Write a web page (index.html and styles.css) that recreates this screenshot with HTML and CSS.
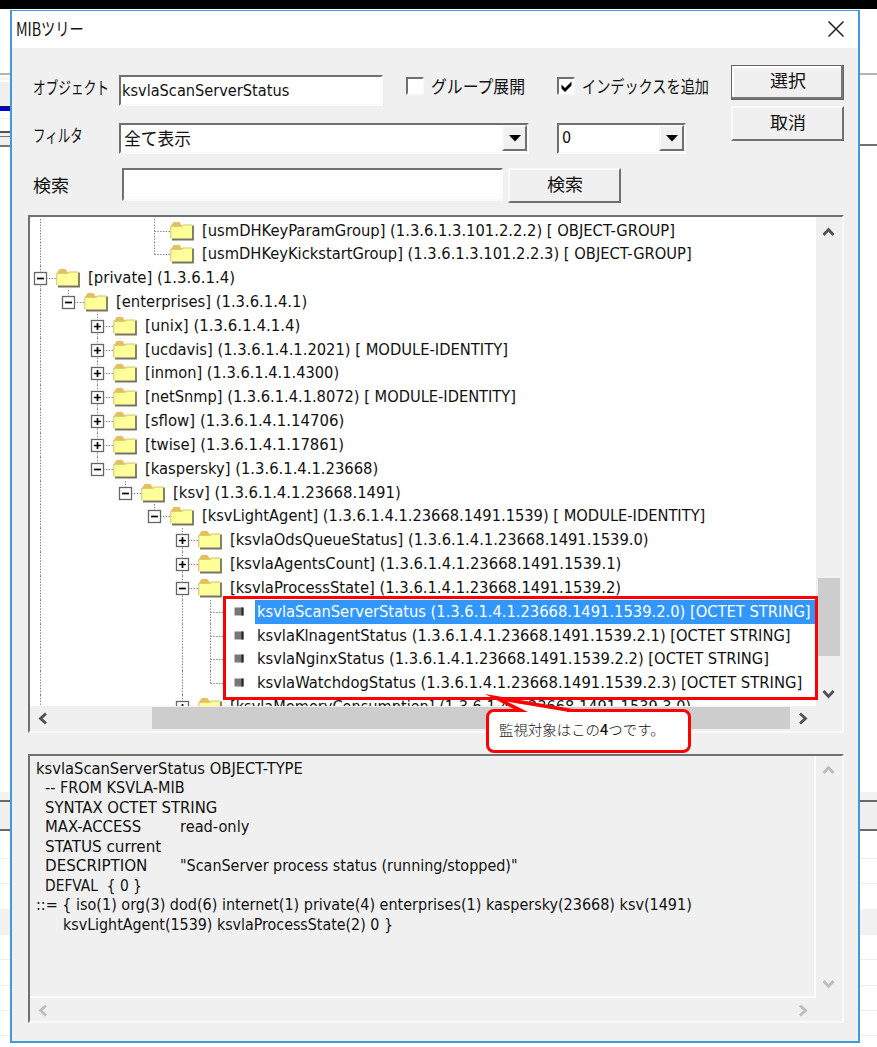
FILE: index.html
```html
<!DOCTYPE html>
<html lang="ja">
<head>
<meta charset="utf-8">
<title>MIBツリー</title>
<link rel="stylesheet" href="styles.css">
</head>
<body>
<div class="topbar"></div>
<div class="desktop">
  <svg class="strip" width="10" height="1038" viewBox="0 9 10 1038" shape-rendering="crispEdges">
    <rect y="73" width="10" height="2" fill="#b4b4b4"/><rect y="77" width="10" height="3" fill="#f4f4f4"/>
    <rect y="82" width="10" height="24" fill="#efefef"/><rect y="106" width="10" height="1" fill="#222"/><rect y="107" width="10" height="4" fill="#0000d8"/>
    <rect y="118" width="10" height="1" fill="#eee"/><rect y="131" width="10" height="2" fill="#555"/><rect y="133" width="10" height="12" fill="#efefef"/>
    <rect y="136" width="10" height="1" fill="#777"/><rect y="145" width="10" height="2" fill="#777"/>
    <rect y="792" width="10" height="8" fill="#f2f2f2"/><rect y="800" width="10" height="2" fill="#6a6a6a"/><rect y="802" width="10" height="27" fill="#efefef"/><rect y="829" width="10" height="2" fill="#6a6a6a"/>
    <path d="M0 858.5H10M0 883.5H10M0 959.5H10M0 985.5H10M0 1010.5H10M0 1035.5H10" stroke="#ececec"/><rect y="909" width="10" height="26" fill="#f1f1f1"/>
  </svg>

  <div class="dialog">
    <div class="titlebar">
      <span class="title" data-w="68">MIBツリー</span>
      <svg class="close" width="18" height="18" viewBox="0 0 18 18"><path d="M1.500 1.500L16.500 16.500M16.500 1.500L1.500 16.500" stroke="#222" stroke-width="1.500"/></svg>
    </div>

    <div class="form">
      <div class="fields">
        <div class="row row-object">
          <span class="label"><span data-w="76">オブジェクト</span></span>
          <div class="sunken text-input"><span class="latin" data-w="167">ksvlaScanServerStatus</span></div>
          <div class="sunken check"></div>
          <span class="check-label"><span data-w="94">グループ展開</span></span>
          <div class="sunken check check-second"><svg width="13" height="13" viewBox="0 0 13 13"><path d="M1.500 4.500L5 8L11.500 1.500V5.500L5 12L1.500 8.500Z"/></svg></div>
          <span class="check-label"><span data-w="127">インデックスを追加</span></span>
        </div>
        <div class="row row-filter">
          <span class="label"><span data-w="50">フィルタ</span></span>
          <div class="sunken combo combo-wide"><span data-w="67">全て表示</span><i class="drop"><svg width="12" height="7"><path d="M0 0H12L6 6.500Z"/></svg></i></div>
          <div class="sunken combo combo-narrow"><span class="latin">0</span><i class="drop"><svg width="12" height="7"><path d="M0 0H12L6 6.500Z"/></svg></i></div>
        </div>
        <div class="row row-search">
          <span class="label"><span data-w="36">検索</span></span>
          <div class="sunken search-input"></div>
          <div class="button"><span data-w="36">検索</span></div>
        </div>
      </div>
      <div class="actions">
        <div class="button default"><span data-w="36">選択</span></div>
        <div class="button"><span data-w="36">取消</span></div>
      </div>
    </div>

    <div class="sunken panel tree-panel">
      <div class="tree" id="tree"></div>
      <div class="vscroll">
        <svg width="13" height="10" viewBox="0 0 13 10"><path d="M1.500 8L6.500 2.500L11.500 8"/></svg>
        <div class="vthumb"></div>
        <svg width="13" height="10" viewBox="0 0 13 10"><path d="M1.500 2L6.500 7.500L11.500 2"/></svg>
      </div>
      <div class="hscroll">
        <svg width="10" height="13" viewBox="0 0 10 13"><path d="M8 1.500L2.500 6.500L8 11.500"/></svg>
        <div class="hthumb"></div>
        <svg width="10" height="13" viewBox="0 0 10 13"><path d="M2 1.500L7.500 6.500L2 11.500"/></svg>
      </div>
    </div>

    <div class="sunken panel detail-panel">
      <div class="detail">
        <div><span data-w="267">ksvlaScanServerStatus OBJECT-TYPE</span></div>
        <div class="in1"><span data-w="140">-- FROM KSVLA-MIB</span></div>
        <div class="in1"><span data-w="172">SYNTAX OCTET STRING</span></div>
        <div class="in1"><b><span data-w="96">MAX-ACCESS</span></b><span data-w="69">read-only</span></div>
        <div class="in1"><span data-w="116">STATUS current</span></div>
        <div class="in1"><b><span data-w="102">DESCRIPTION</span></b><span data-w="338">"ScanServer process status (running/stopped)"</span></div>
        <div class="in1"><span data-w="97">DEFVAL&nbsp; { 0 }</span></div>
        <div><span data-w="656">::= { iso(1) org(3) dod(6) internet(1) private(4) enterprises(1) kaspersky(23668) ksv(1491)</span></div>
        <div class="in2"><span data-w="330">ksvLightAgent(1539) ksvlaProcessState(2) 0 }</span></div>
      </div>
      <div class="vscroll disabled">
        <svg width="13" height="10" viewBox="0 0 13 10"><path d="M1.500 8L6.500 2.500L11.500 8"/></svg>
        <svg width="13" height="10" viewBox="0 0 13 10"><path d="M1.500 2L6.500 7.500L11.500 2"/></svg>
      </div>
      <div class="hscroll disabled">
        <svg width="10" height="13" viewBox="0 0 10 13"><path d="M8 1.500L2.500 6.500L8 11.500"/></svg>
        <svg width="10" height="13" viewBox="0 0 10 13"><path d="M2 1.500L7.500 6.500L2 11.500"/></svg>
      </div>
    </div>
  </div>

  <svg class="strip" width="17" height="1038" viewBox="0 9 17 1038" shape-rendering="crispEdges">
    <rect y="73" width="17" height="2" fill="#b4b4b4"/><rect y="144" width="17" height="2" fill="#707070"/>
    <rect y="792" width="17" height="8" fill="#f2f2f2"/><rect y="800" width="17" height="2" fill="#6a6a6a"/><rect y="802" width="17" height="27" fill="#efefef"/><rect y="829" width="17" height="2" fill="#6a6a6a"/>
    <path d="M0 858.500H17M0 883.500H17M0 959.500H17M0 985.500H17M0 1010.500H17M0 1035.500H17" stroke="#ececec"/><rect y="909" width="17" height="26" fill="#f1f1f1"/>
  </svg>
</div>

<div class="highlight"></div>
<div class="callout"><span data-w="166">監視対象はこの<b>4</b>つです。</span></div>
<svg class="tail" width="100" height="21" viewBox="0 0 100 21"><path d="M34 17.500L14 7.500L82 17.500V21H34Z" fill="#fff"/><path d="M0 1L88 16V19H84L22 8.500L43 19H26L29 16Z" fill="#f00"/></svg>
<script src="tree.js"></script>
</body>
</html>
```
FILE: styles.css
```css
* { box-sizing: border-box; }
body {
  margin: 0;
  width: 877px;
  height: 1047px;
  overflow: hidden;
  position: relative;
  background: #fff;
  color: #111;
  font: 17.500px/24px "Noto Sans CJK JP", sans-serif;
}
svg { display: block; flex: none; }
span { white-space: pre; }
[data-w] { display: inline-block; transform-origin: 0 50%; }
.topbar { height: 9px; background: #000; }
.desktop { display: flex; height: 1038px; }
.dialog {
  width: 850px;
  height: 1033px;
  margin-top: 1px;
  border: 2px solid #4599d6;
  border-top-width: 1px;
  background: #f0f0f0;
}
.titlebar {
  height: 37px;
  padding: 0 13px 3px 4px;
  display: flex;
  align-items: center;
  justify-content: space-between;
  background: #fff;
}
.title { font-size: 18px; }
.close { margin-top: 2px; }
.latin, .tree, .detail { font-family: "DejaVu Sans Condensed", "DejaVu Sans", sans-serif; font-stretch: condensed; }
.latin { font-size: 16px; }

.form { height: 167px; padding: 17px 14px 0 21px; display: flex; }
.fields { width: 699px; }
.row { display: flex; align-items: flex-start; }
.row-object { height: 48px; padding-top: 10px; }
.row-filter { height: 45px; padding-top: 10px; }
.row-search { padding-top: 10px; }
.label { width: 86px; flex: none; height: 28px; }
.row-search .label { width: 89px; padding-top: 5px; }
.sunken {
  border: 2px solid;
  border-color: #707070 #fafafa #fafafa #707070;
  background: #fff;
}
.text-input { width: 264px; height: 31px; margin-right: 23px; padding: 0 1px; line-height: 23px; }
.check { width: 18px; height: 18px; margin: 2px 7px 0 0; flex: none; padding: 1px; }
.check-label { width: 126px; line-height: 22px; flex: none; }
.check-label:last-child { width: 130px; }
.combo { height: 31px; display: flex; justify-content: space-between; padding-left: 3px; line-height: 26px; }
.combo-wide { width: 410px; margin-right: 28px; }
.combo-narrow { width: 129px; }
.drop {
  width: 25px;
  height: 26px;
  display: flex;
  align-items: center;
  justify-content: center;
  background: #f0f0f0;
  border: 2px solid;
  border-color: #f8f8f8 #707070 #707070 #f8f8f8;
}
.search-input { width: 381px; height: 33px; margin-right: 5px; }
.button {
  width: 113px;
  height: 35px;
  display: flex;
  align-items: center;
  justify-content: center;
  background: #f0f0f0;
  border: 2px solid;
  border-color: #fafafa #707070 #707070 #fafafa;
  padding-bottom: 4px;
}
.actions { display: flex; flex-direction: column; gap: 6px; }
.default { border: 1px solid #666; box-shadow: inset -2px -2px #777, inset 2px 2px #fff; padding-bottom: 5px; }

.panel {
  margin-left: 16px;
  width: 816px;
  display: grid;
  grid-template-columns: 1fr 26px;
  background: #f0f0f0;
}
.tree-panel { height: 518px; grid-template-rows: 489px 25px; }
.tree { background: #fff; overflow: hidden; padding-top: 1.500px; font-size: 16px; }
.node { display: flex; height: 23.840px; line-height: 24.800px; }
.node .name { flex: none; height: 23.840px; }
.selected { background: #3297fd; color: #fff; width: 561px; margin-left: -2px; padding-left: 2px; }
.vscroll { display: flex; flex-direction: column; align-items: center; padding: 10px 2px 7px 1px; background: #f0f0f0; }
.vthumb { width: 22px; height: 78px; margin: 341px 0 auto; background: #cdcdcd; }
.hscroll { display: flex; align-items: center; padding: 0 8px 0 8px; }
.hthumb { width: 638px; height: 22px; margin: 0 auto 2px 104px; background: #cdcdcd; }
.vscroll path, .hscroll path { fill: none; stroke: #505050; stroke-width: 2.800; }
.detail-panel { height: 269px; margin-top: 21px; grid-template-rows: 242px 23px; }
.detail {
  padding: 3px 0 0 6px;
  line-height: 20.400px;
  font-size: 16px;
  border: solid #fcfcfc;
  border-width: 0 2px 2px 0;
}
.detail div { height: 19.450px; display: flex; }
.detail b { font-weight: normal; width: 135px; }
.detail .in1 { padding-left: 9px; }
.detail .in2 { padding-left: 27px; }
.disabled { justify-content: space-between; }
.disabled path { stroke: #bdbdbd; }
.vscroll.disabled { padding-top: 9px; padding-bottom: 9px; }
.hscroll.disabled { padding-top: 2px; }

.highlight { position: absolute; left: 223px; top: 596px; width: 595px; height: 104px; border: 3px solid #f00; }
.callout {
  position: absolute;
  left: 486px;
  top: 709px;
  width: 205px;
  height: 44px;
  border: 3px solid #f00;
  border-radius: 8px;
  background: #fff;
  padding: 5px 0 0 10px;
  font: 300 14px/24px "Noto Sans CJK JP", sans-serif;
}
.callout b { font-weight: 500; }
.tail { position: absolute; left: 485px; top: 693px; }
```
FILE: tree.js
```js
const STEP = 28.4;

// level, name, label width, marker (+, -, leaf or none), guide levels, last child
const rows = [
  [4, '[usmDHKeyParamGroup] (1.3.6.1.3.101.2.2.2) [ OBJECT-GROUP]', 473, '', [0, 4]],
  [4, '[usmDHKeyKickstartGroup] (1.3.6.1.3.101.2.2.3) [ OBJECT-GROUP]', 490, '', [0], 1],
  [0, '[private] (1.3.6.1.4)', 147, '-', [0]],
  [1, '[enterprises] (1.3.6.1.4.1)', 191, '-', [0], 1],
  [2, '[unix] (1.3.6.1.4.1.4)', 155, '+', [0, 2]],
  [2, '[ucdavis] (1.3.6.1.4.1.2021) [ MODULE-IDENTITY]', 363, '+', [0, 2]],
  [2, '[inmon] (1.3.6.1.4.1.4300)', 194, '+', [0, 2]],
  [2, '[netSnmp] (1.3.6.1.4.1.8072) [ MODULE-IDENTITY]', 371, '+', [0, 2]],
  [2, '[sflow] (1.3.6.1.4.1.14706)', 199, '+', [0, 2]],
  [2, '[twise] (1.3.6.1.4.1.17861)', 199, '+', [0, 2]],
  [2, '[kaspersky] (1.3.6.1.4.1.23668)', 233, '-', [0], 1],
  [3, '[ksv] (1.3.6.1.4.1.23668.1491)', 228, '-', [0], 1],
  [4, '[ksvLightAgent] (1.3.6.1.4.1.23668.1491.1539) [ MODULE-IDENTITY]', 503, '-', [0], 1],
  [5, '[ksvlaOdsQueueStatus] (1.3.6.1.4.1.23668.1491.1539.0)', 419, '+', [0, 5]],
  [5, '[ksvlaAgentsCount] (1.3.6.1.4.1.23668.1491.1539.1)', 391, '+', [0, 5]],
  [5, '[ksvlaProcessState] (1.3.6.1.4.1.23668.1491.1539.2)', 391, '-', [0, 5]],
  [6, 'ksvlaScanServerStatus (1.3.6.1.4.1.23668.1491.1539.2.0) [OCTET STRING]', 554, 'leaf', [0, 5, 6]],
  [6, 'ksvlaKlnagentStatus (1.3.6.1.4.1.23668.1491.1539.2.1) [OCTET STRING]', 534, 'leaf', [0, 5, 6]],
  [6, 'ksvlaNginxStatus (1.3.6.1.4.1.23668.1491.1539.2.2) [OCTET STRING]', 512, 'leaf', [0, 5, 6]],
  [6, 'ksvlaWatchdogStatus (1.3.6.1.4.1.23668.1491.1539.2.3) [OCTET STRING]', 545, 'leaf', [0, 5], 1],
  [5, '[ksvlaMemoryConsumption] (1.3.6.1.4.1.23668.1491.1539.3.0)', 461, '+', [0, 5]]
];

const folder = x => `<g transform="translate(${x} 1.500)">
  <path d="M1 5.500L3.500 1.500H9.500L12 5.500Z" fill="#e6c060"/>
  <path d="M12 4.500H22L23 6V18H1V5.500H12Z" fill="#ffff99"/>
  <path d="M.8 18V5.800H12.500L13 4.500H22" fill="none" stroke="#cfc36c"/>
  <path d="M23 5V19H2" fill="none" stroke="#77755a" stroke-width="1.800"/></g>`;

document.getElementById('tree').innerHTML = rows.map(([level, name, w, mark, guides, half], i) => {
  const x = Math.round(10 + level * STEP) + 0.5;
  const cy = 12.5;
  let g = guides.map(l => {
    const gx = Math.round(10 + l * STEP) + 0.5;
    return `<path d="M${gx} 0V24"/>`;
  }).join('');
  if (half) g += `<path d="M${x} 0V${cy}"/>`;
  g += `<path d="M${x} ${cy}H${x + 17}"/>`;
  let icon = '';
  if (mark === '+' || mark === '-') {
    icon = `<rect x="${x - 6}" y="6.500" width="12" height="12" fill="#fff" stroke="#666" stroke-width="1.300"/>
      <path d="M${x - 3.5} ${cy}H${x + 3.5}${mark === '+' ? `M${x} 9V16` : ''}" stroke="#000" stroke-width="1.700"/>`;
  }
  const leaf = mark === 'leaf';
  icon += leaf
    ? `<rect x="${x + 24}" y="7.500" width="9" height="8" fill="#777"/><path d="M${x + 32} 7.500V15.500" stroke="#222" stroke-width="2"/>`
    : folder(x + 15.5);
  const textX = leaf ? 227 : 10 + level * STEP + 48;
  return `<div class="node"><svg width="${textX}" height="23.84">
    <g fill="none" stroke="#808080" stroke-dasharray="1.400 1.400">${g}</g>${icon}</svg>
    <div class="name${i === 16 ? ' selected' : ''}"><span data-w="${w}">${name}</span></div></div>`;
}).join('');

// condense each label horizontally to its nominal width
document.querySelectorAll('[data-w]').forEach(el => {
  const want = +el.dataset.w;
  const have = el.offsetWidth;
  el.style.transform = `scaleX(${want / have})`;
  el.style.marginRight = `${want - have}px`;
});
```
